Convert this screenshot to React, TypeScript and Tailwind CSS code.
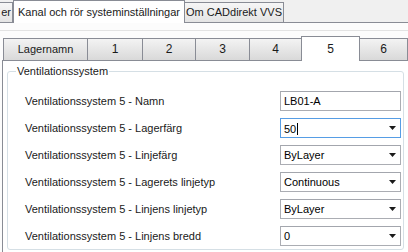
import React from "react";

const rows: { label: string; value: string; kind: "text" | "select"; focused?: boolean }[] = [
  { label: "Ventilationssystem 5 - Namn", value: "LB01-A", kind: "text" },
  { label: "Ventilationssystem 5 - Lagerfärg", value: "50", kind: "select", focused: true },
  { label: "Ventilationssystem 5 - Linjefärg", value: "ByLayer", kind: "select" },
  { label: "Ventilationssystem 5 - Lagerets linjetyp", value: "Continuous", kind: "select" },
  { label: "Ventilationssystem 5 - Linjens linjetyp", value: "ByLayer", kind: "select" },
  { label: "Ventilationssystem 5 - Linjens bredd", value: "0", kind: "select" },
];

const innerTabs = [
  { label: "Lagernamn", w: "w-[84px]", size: "text-[11px]" },
  { label: "1", w: "w-[55px]", size: "text-[12px]" },
  { label: "2", w: "w-[53px]", size: "text-[12px]" },
  { label: "3", w: "w-[54px]", size: "text-[12px]" },
  { label: "4", w: "w-[52px]", size: "text-[12px]" },
];

function Arrow() {
  return (
    <svg width="7" height="4" viewBox="0 0 7 4" className="shrink-0">
      <path d="M0 0h7L3.5 4z" fill="#1a1a1a" />
    </svg>
  );
}

function Field({ value, kind, focused }: { value: string; kind: "text" | "select"; focused?: boolean }) {
  return (
    <div
      className={`flex h-[20px] w-[121px] items-center border bg-white pl-[3px] pr-[4px] ${
        focused ? "border-[#569de5]" : "border-[#abadb3] border-t-[#a3a6ad]"
      }`}
    >
      <span className="flex-1 text-black">
        {value}
        {focused && <span className="ml-px inline-block h-[12px] w-px translate-y-[2px] bg-black" />}
      </span>
      {kind === "select" && <Arrow />}
    </div>
  );
}

export default function App() {
  return (
    <div
      className="h-[252px] w-[408px] overflow-hidden bg-[#f0f0f0] text-[11px] leading-[13px] text-[#1a1a1a]"
      style={{ fontFamily: '"Liberation Sans", Arial, sans-serif' }}
    >
      {/* outer tabs */}
      <div className="flex h-[22px] items-end whitespace-nowrap">
        <div className="flex h-[20px] w-[13px] items-center justify-end overflow-hidden border border-b-0 border-l-0 border-[#898c95] bg-linear-to-b from-[#f6f6f6] to-[#e4e4e4] pr-[1px]">
          er
        </div>
        <div className="relative z-10 -mb-px flex h-[23px] w-[172px] items-center justify-center border border-b-0 border-[#898c95] bg-white">
          Kanal och rör systeminställningar
        </div>
        <div className="flex h-[20px] w-[99px] items-center justify-center border border-b-0 border-l-0 border-[#898c95] bg-linear-to-b from-[#f6f6f6] to-[#e4e4e4]">
          Om CADdirekt VVS
        </div>
        <div className="flex-1" />
      </div>

      {/* outer page */}
      <div className="border-t border-[#898c95] bg-[#fcfcfc]">
        <div className="mt-[7px] h-px bg-[#e3e3e3]" />
        <div className="pt-[5px]">
          {/* inner tabs */}
          <div className="flex h-[24px] items-end pl-[3px]">
            {innerTabs.map((t) => (
              <div
                key={t.label}
                className={`flex h-[22px] ${t.w} ${t.size} items-center justify-center border border-b-0 border-r-0 border-[#898c95] bg-linear-to-b from-[#f3f3f3] to-[#d9d9d9]`}
              >
                {t.label}
              </div>
            ))}
            <div className="relative z-10 -mb-px flex h-[25px] w-[59px] items-center justify-center border border-b-0 border-[#898c95] bg-white text-[12px]">
              5
            </div>
            <div className="flex h-[22px] flex-1 items-center justify-center border border-b-0 border-l-0 border-[#898c95] bg-linear-to-b from-[#f3f3f3] to-[#d9d9d9] text-[12px]">
              6
            </div>
          </div>

          {/* inner page */}
          <div className="ml-[2px] h-[200px] border-l border-t border-[#898c95] bg-white pl-[4px] pt-[10px]">
            <div className="relative w-[397px] rounded-[3px] border border-[#d5dfe5] pb-[3px] pl-[17px] pr-[2px] pt-[19px]">
              <span className="absolute left-[8px] top-[-7px] bg-white px-[1px] text-[11px] leading-[13px]">
                Ventilationssystem
              </span>
              <div className="flex flex-col gap-[7px]">
                {rows.map((r) => (
                  <div key={r.label} className="flex h-[20px] items-center justify-between">
                    <span className="text-[11px]">{r.label}</span>
                    <Field value={r.value} kind={r.kind} focused={r.focused} />
                  </div>
                ))}
              </div>
            </div>
          </div>
        </div>
      </div>
    </div>
  );
}
